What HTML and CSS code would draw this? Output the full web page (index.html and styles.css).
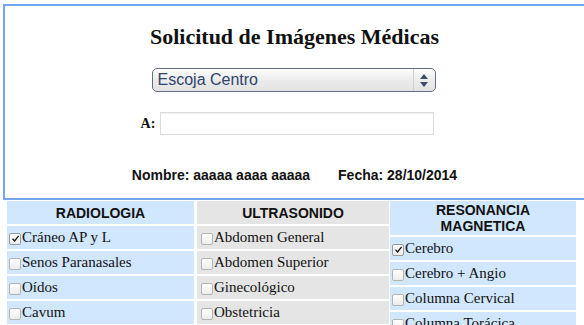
FILE: index.html
```html
<!DOCTYPE html>
<html lang="es">
<head>
  <meta charset="UTF-8">
  <title>Solicitud de Imágenes Médicas</title>
  <link rel="stylesheet" href="styles.css">
</head>
<body>
  <div class="form-box">
    <h1>Solicitud de Imágenes Médicas</h1>

    <div class="centro">
      <span class="centro-text">Escoja Centro</span>
      <span class="centro-arrows">
        <svg width="8" height="13" viewBox="0 0 8 13">
          <path d="M4 0 L8 5 L0 5 Z" fill="#3d4f66"/>
          <path d="M0 8 L8 8 L4 13 Z" fill="#3d4f66"/>
        </svg>
      </span>
    </div>

    <div class="para">
      <label for="para">A:</label>
      <input type="text" id="para">
    </div>

    <p class="info">Nombre: aaaaa aaaa aaaaa<span class="sep"></span>Fecha: 28/10/2014</p>
  </div>

  <div class="examenes">
    <div class="col blue">
      <div class="head">RADIOLOGIA</div>
      <div class="item"><span class="box checked"><svg width="9" height="9" viewBox="0 0 9 9"><path d="M1.5 4.8 L3.6 7 L7.6 1.8" fill="none" stroke="#111" stroke-width="1.3"/></svg></span>Cráneo AP y L</div>
      <div class="item"><span class="box"></span>Senos Paranasales</div>
      <div class="item"><span class="box"></span>Oídos</div>
      <div class="item"><span class="box"></span>Cavum</div>
    </div>

    <div class="col grey">
      <div class="head">ULTRASONIDO</div>
      <div class="item"><span class="box"></span>Abdomen General</div>
      <div class="item"><span class="box"></span>Abdomen Superior</div>
      <div class="item"><span class="box"></span>Ginecológico</div>
      <div class="item"><span class="box"></span>Obstetricia</div>
    </div>

    <div class="col blue last">
      <div class="head">RESONANCIA<br>MAGNETICA</div>
      <div class="item"><span class="box checked"><svg width="9" height="9" viewBox="0 0 9 9"><path d="M1.5 4.8 L3.6 7 L7.6 1.8" fill="none" stroke="#111" stroke-width="1.3"/></svg></span>Cerebro</div>
      <div class="item"><span class="box"></span>Cerebro + Angio</div>
      <div class="item"><span class="box"></span>Columna Cervical</div>
      <div class="item"><span class="box"></span>Columna Torácica</div>
    </div>
  </div>
</body>
</html>
```

FILE: styles.css
```css
html,
body {
  overflow: hidden;
}
body {
  margin: 0;
  padding: 4px 0 0 3px;
  width: 581px;
  font-family: "Liberation Serif", "Times New Roman", serif;
  color: #111;
  background: #fff;
}
.form-box {
  width: 579px;
  padding: 0 20px 14px 0;
  border: 2px solid #74a4f2;
  display: flex;
  flex-direction: column;
  align-items: center;
}
h1 {
  margin: 18px 0 0;
  font-size: 22px;
  line-height: 26px;
  font-weight: bold;
}
.centro {
  margin-top: 18px;
  margin-left: -2px;
  width: 282px;
  height: 22px;
  border: 1px solid #5f6f86;
  border-radius: 5px;
  background: linear-gradient(#fdfdfd, #ececec 50%, #e2e2e2);
  display: flex;
  align-items: center;
  font-family: "Liberation Sans", Arial, sans-serif;
  font-size: 16px;
  color: #2e4569;
}
.centro-text {
  flex: 1;
  padding-left: 5px;
}
.centro-arrows {
  width: 21px;
  height: 100%;
  border-left: 1px solid #cfcfcf;
  display: flex;
  align-items: center;
  justify-content: center;
}
.para {
  margin-top: 20px;
  display: flex;
  align-items: center;
  margin-left: -14px;
}
.para label {
  font-weight: bold;
  font-size: 14px;
  margin-right: 5px;
}
.para input {
  width: 272px;
  height: 21px;
  padding: 0;
  margin: 0;
  border: 1px solid #dcdcdc;
  box-shadow: inset 0 1px 1px #eee;
}
.info {
  margin: 32px 0 0;
  font-family: "Liberation Sans", Arial, sans-serif;
  font-weight: bold;
  font-size: 14px;
  line-height: 17px;
}
.sep {
  display: inline-block;
  width: 28px;
}
.examenes {
  display: flex;
  align-items: flex-start;
  margin: 1px 0 0 4px;
}
.col {
  width: 187px;
  display: flex;
  flex-direction: column;
  gap: 2px;
}
.col.grey {
  width: 192px;
  margin: 0 1px 0 3px;
}
.col.last {
  width: 186px;
}
.head,
.item {
  min-height: 23px;
}
.head {
  font-family: "Liberation Sans", Arial, sans-serif;
  font-weight: bold;
  font-size: 14px;
  line-height: 16px;
  text-align: center;
  padding: 4px 0 3px;
  box-sizing: border-box;
}
.last .head {
  padding: 1px 0;
  min-height: 33px;
}
.item {
  display: flex;
  align-items: center;
  padding-left: 2px;
  font-size: 15px;
  line-height: 23px;
  white-space: nowrap;
}
.grey .item {
  padding-left: 4px;
}
.blue .head,
.blue .item {
  background: #d1e7fd;
}
.grey .head,
.grey .item {
  background: #e5e5e5;
}
.box {
  width: 10px;
  height: 10px;
  margin: 2px 1px 0 0;
  border: 1px solid #b4b4b4;
  border-radius: 2px;
  background: linear-gradient(#fff, #ececec);
  display: flex;
  align-items: center;
  justify-content: center;
}
.box.checked {
  border-color: #9a9a9a;
}
```
